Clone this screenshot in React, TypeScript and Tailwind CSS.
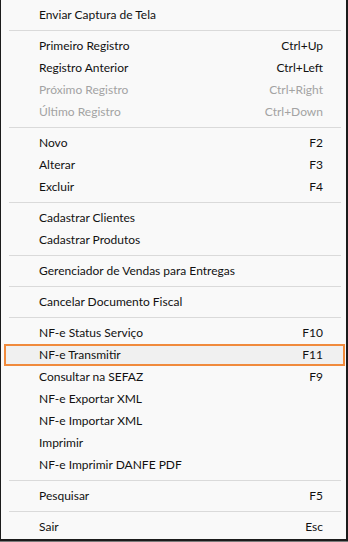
import React from 'react';

type Entry =
    | { kind: 'item'; label: string; shortcut?: string; disabled?: boolean; active?: boolean }
    | { kind: 'sep' };

const item = (label: string, shortcut?: string, extra: { disabled?: boolean; active?: boolean } = {}): Entry => ({
    kind: 'item',
    label,
    shortcut,
    ...extra,
});
const sep: Entry = { kind: 'sep' };

const entries: Entry[] = [
    item('Enviar Captura de Tela'),
    sep,
    item('Primeiro Registro', 'Ctrl+Up'),
    item('Registro Anterior', 'Ctrl+Left'),
    item('Próximo Registro', 'Ctrl+Right', { disabled: true }),
    item('Último Registro', 'Ctrl+Down', { disabled: true }),
    sep,
    item('Novo', 'F2'),
    item('Alterar', 'F3'),
    item('Excluir', 'F4'),
    sep,
    item('Cadastrar Clientes'),
    item('Cadastrar Produtos'),
    sep,
    item('Gerenciador de Vendas para Entregas'),
    sep,
    item('Cancelar Documento Fiscal'),
    sep,
    item('NF-e Status Serviço', 'F10'),
    item('NF-e Transmitir', 'F11', { active: true }),
    item('Consultar na SEFAZ', 'F9'),
    item('NF-e Exportar XML'),
    item('NF-e Importar XML'),
    item('Imprimir'),
    item('NF-e Imprimir DANFE PDF'),
    sep,
    item('Pesquisar', 'F5'),
    sep,
    item('Sair', 'Esc'),
];

function MenuRow({ entry }: { entry: Entry }) {
    if (entry.kind === 'sep') {
        return (
            <div className="h-[9px] flex items-center pl-[8px] pr-[5px]">
                <div className="h-px w-full bg-[#dadada]" />
            </div>
        );
    }

    const color = entry.disabled ? 'text-[#a3a3a3]' : 'text-[#111]';
    const box = entry.active ? 'border-[#f08a3c] bg-[#f0f0f0]' : 'border-transparent';

    return (
        <div className={`h-[22px] ml-[3px] mr-px pl-[33px] pr-[20px] border-2 flex items-center justify-between ${box} ${color}`}>
            <span>{entry.label}</span>
            {entry.shortcut && <span>{entry.shortcut}</span>}
        </div>
    );
}

export default function App() {
    return (
        <div className="w-[348px] h-[542px] bg-[#7a7a7a]">
            <div
                className="h-[541px] bg-[#f9f9f9] border-l border-r-2 border-b-2 border-[#1b1b1b] pt-[4px] text-[12px] leading-none"
                style={{ fontFamily: 'Lato, "Noto Sans", sans-serif' }}
            >
                {entries.map((e, i) => (
                    <MenuRow key={i} entry={e} />
                ))}
            </div>
        </div>
    );
}
